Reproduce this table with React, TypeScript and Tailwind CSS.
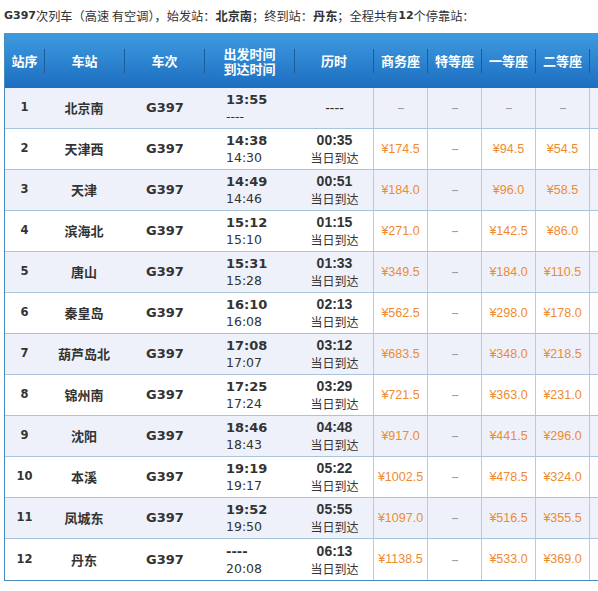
import React from "react";

// 经停站数据：站名、出发、到达、历时、商务座、一等座、二等座
const stops = [
  ["北京南", "13:55", "----", "----", "", "", ""],
  ["天津西", "14:38", "14:30", "00:35", "174.5", "94.5", "54.5"],
  ["天津", "14:49", "14:46", "00:51", "184.0", "96.0", "58.5"],
  ["滨海北", "15:12", "15:10", "01:15", "271.0", "142.5", "86.0"],
  ["唐山", "15:31", "15:28", "01:33", "349.5", "184.0", "110.5"],
  ["秦皇岛", "16:10", "16:08", "02:13", "562.5", "298.0", "178.0"],
  ["葫芦岛北", "17:08", "17:07", "03:12", "683.5", "348.0", "218.5"],
  ["锦州南", "17:25", "17:24", "03:29", "721.5", "363.0", "231.0"],
  ["沈阳", "18:46", "18:43", "04:48", "917.0", "441.5", "296.0"],
  ["本溪", "19:19", "19:17", "05:22", "1002.5", "478.5", "324.0"],
  ["凤城东", "19:52", "19:50", "05:55", "1097.0", "516.5", "355.5"],
  ["丹东", "----", "20:08", "06:13", "1138.5", "533.0", "369.0"],
];

const cjk = "font-['Noto_Sans_CJK_SC',sans-serif]";
const num = "font-['DejaVu_Sans','Noto_Sans_CJK_SC',sans-serif]";
const arial = "font-['Liberation_Sans','Noto_Sans_CJK_SC',sans-serif]";

function Divider() {
  return <div className="w-px h-[24px] self-center bg-[#1c5c9a] shrink-0" />;
}

function Dash() {
  return <span className={`${arial} text-[12px] text-[#999] tracking-[-1px]`}>--</span>;
}

function Price({ value }: { value: string }) {
  return (
    <div className="w-[54px] shrink-0 border-l border-[#b8cddc] flex items-center justify-center">
      {value ? (
        <span className={`${arial} text-[12.5px] text-[#f08a30]`}>¥{value}</span>
      ) : (
        <Dash />
      )}
    </div>
  );
}

export default function App() {
  return (
    <div className="w-[598px] h-[591px] overflow-hidden bg-white text-[#333]">
      {/* 标题 */}
      <div className={`h-[33px] pl-[4px] flex items-center whitespace-nowrap text-[12.2px] ${cjk}`}>
        <b className={`${num} text-[11px]`}>G397</b>
        <span>次列车（高速 有空调），始发站：</span>
        <b>北京南</b>
        <span>；终到站：</span>
        <b>丹东</b>
        <span>；全程共有</span>
        <b className={`${num} text-[11px]`}>12</b>
        <span>个停靠站：</span>
      </div>

      {/* 时刻表 */}
      <div className="ml-[4px] w-[700px] border-l border-b border-[#4a8bbd]">
        <div
          className={`h-[55px] flex bg-gradient-to-b from-[#3f9be0] to-[#1c6ec0] text-white font-bold text-[13px] leading-[15px] ${cjk}`}
        >
          <div className="w-[39px] shrink-0 flex items-center justify-center">站序</div>
          <Divider />
          <div className="w-[79px] shrink-0 flex items-center justify-center">车站</div>
          <Divider />
          <div className="w-[79px] shrink-0 flex items-center justify-center">车次</div>
          <Divider />
          <div className="w-[89px] shrink-0 flex items-center justify-center text-center">
            出发时间
            <br />
            到达时间
          </div>
          <Divider />
          <div className="w-[78px] shrink-0 flex items-center justify-center">历时</div>
          <Divider />
          <div className="w-[53px] shrink-0 flex items-center justify-center">商务座</div>
          <Divider />
          <div className="w-[53px] shrink-0 flex items-center justify-center">特等座</div>
          <Divider />
          <div className="w-[53px] shrink-0 flex items-center justify-center">一等座</div>
          <Divider />
          <div className="w-[53px] shrink-0 flex items-center justify-center">二等座</div>
          <Divider />
          <div className="w-[53px] shrink-0 flex items-center justify-center text-center">
            高级
            <br />
            软卧
          </div>
        </div>

        {stops.map((s, i) => (
          <div
            key={i}
            className={`h-[41px] flex border-b border-[#a9c5da] last:border-b-0 ${
              i % 2 === 0 ? "bg-[#eef1f9]" : "bg-white"
            }`}
          >
            <div className={`w-[39px] shrink-0 flex items-center justify-center font-bold text-[11.5px] ${num}`}>
              {i + 1}
            </div>
            <div className={`w-[80px] shrink-0 flex items-center justify-center font-bold text-[13px] ${cjk}`}>
              {s[0]}
            </div>
            <div className={`w-[80px] shrink-0 pl-[2px] flex items-center justify-center font-bold text-[13px] ${num}`}>
              G397
            </div>
            <div className={`w-[90px] shrink-0 pl-[22px] flex flex-col justify-center leading-[17px] ${num}`}>
              <span className="font-bold text-[13px]">{s[1]}</span>
              <span className="text-[12.5px]">{s[2]}</span>
            </div>
            <div className="w-[79px] shrink-0 pl-[2px] flex flex-col items-center justify-center leading-[18px]">
              <span className={`${i > 0 ? "font-bold" : "font-normal"} text-[14px] ${arial}`}>{s[3]}</span>
              {i > 0 && <span className={`text-[12px] ${cjk}`}>当日到达</span>}
            </div>
            <Price value={s[4]} />
            <Price value="" />
            <Price value={s[5]} />
            <Price value={s[6]} />
            <div className="w-[60px] shrink-0 border-l border-[#b8cddc]" />
          </div>
        ))}
      </div>

      <div className="mt-[10px] h-[2px] bg-[#5b9bd0]" />
    </div>
  );
}
